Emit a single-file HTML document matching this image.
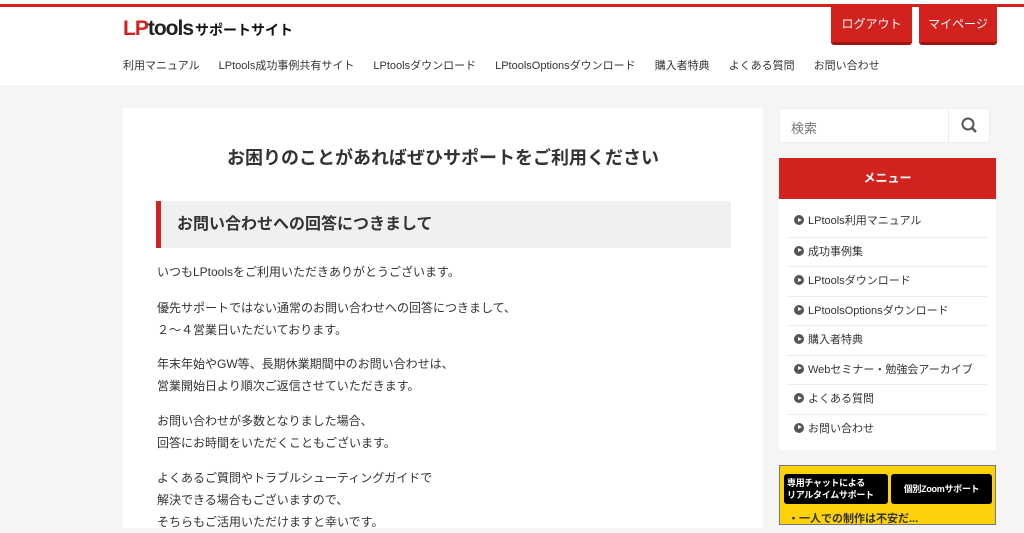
<!DOCTYPE html>
<html><head><meta charset="utf-8"><style>
*{margin:0;padding:0;box-sizing:border-box}
body{width:1024px;height:523px;overflow:hidden;background:#f5f5f5;font-family:"Liberation Sans","Noto Sans CJK JP",sans-serif;color:#333;position:relative}
.top{position:absolute;left:0;top:0;width:1024px;height:85px;background:#fff;border-top:4px solid #fff}
.redline{position:absolute;left:0;top:4px;width:1024px;height:3px;background:#d2221e}
.logo{position:absolute;left:123px;top:17px;font-weight:bold;font-size:21px;letter-spacing:-1px}
.logo .lp{color:#d2221e}.logo .t{color:#222}
.logo .s{font-size:14px;letter-spacing:0;margin-left:2px;color:#111}
.btn{position:absolute;top:7px;height:38px;background:#d2221e;color:#fff;font-size:12px;text-align:center;line-height:34px;border-bottom:3px solid #a01512;border-radius:0 0 3px 3px}
.nav{position:absolute;top:57px;left:123px;font-size:11px;color:#333;white-space:nowrap}
.nav span{margin-right:19px}
.main{position:absolute;left:123px;top:108px;width:640px;height:420px;background:#fff}
h1{position:absolute;left:0;width:640px;top:36px;text-align:center;font-size:18px;font-weight:bold;color:#333}
h2{position:absolute;left:33px;top:93px;width:575px;height:47px;background:#f0f0f0;border-left:5px solid #d2221e;font-size:16px;font-weight:bold;line-height:47px;padding-left:16px;color:#333}
.p{position:absolute;left:34px;font-size:12px;line-height:22px;color:#333}
.search{position:absolute;left:779px;top:108px;width:211px;height:35px;background:#fff;border:1px solid #eee;border-radius:3px}
.search span{position:absolute;left:11px;top:9px;font-size:13px;color:#777}
.search .b{position:absolute;left:168px;top:0;width:42px;height:33px;border-left:1px solid #eee}
.menu{position:absolute;left:779px;top:158px;width:217px;height:292px;background:#fff}
.mh{height:41px;background:#d2221e;color:#fff;font-size:12px;font-weight:bold;text-align:center;line-height:41px}
.mi{margin:0 8px;height:29.5px;border-top:1px solid #eee;font-size:11px;line-height:29px;padding-left:7px;color:#333}
.mi i{display:inline-block;width:10px;height:10px;border-radius:50%;background:#555;vertical-align:-1px;margin-right:4px;position:relative}
.mi i:after{content:"";position:absolute;left:4px;top:2.5px;border-left:4px solid #fff;border-top:2.5px solid transparent;border-bottom:2.5px solid transparent}
.ad{position:absolute;left:779px;top:465px;width:217px;height:60px;background:#fdd20b;border:1px solid #777}
.ab{position:absolute;top:8px;height:30px;background:#000;color:#fff;font-size:9px;font-weight:bold;border-radius:3px;line-height:12px;padding:3px 3px;white-space:nowrap;letter-spacing:-0.3px}
</style></head><body>
<div class="top"></div><div class="redline"></div>
<div class="logo"><span class="lp">LP</span><span class="t">tools</span><span class="s">サポートサイト</span></div>
<div class="btn" style="left:831px;width:81px">ログアウト</div>
<div class="btn" style="left:919px;width:78px">マイページ</div>
<div class="nav"><span>利用マニュアル</span><span>LPtools成功事例共有サイト</span><span>LPtoolsダウンロード</span><span>LPtoolsOptionsダウンロード</span><span>購入者特典</span><span>よくある質問</span><span>お問い合わせ</span></div>
<div class="main">
<h1>お困りのことがあればぜひサポートをご利用ください</h1>
<h2>お問い合わせへの回答につきまして</h2>
<div class="p" style="top:153px">いつもLPtoolsをご利用いただきありがとうございます。</div>
<div class="p" style="top:189px">優先サポートではない通常のお問い合わせへの回答につきまして、<br>２～４営業日いただいております。</div>
<div class="p" style="top:245px">年末年始やGW等、長期休業期間中のお問い合わせは、<br>営業開始日より順次ご返信させていただきます。</div>
<div class="p" style="top:302px">お問い合わせが多数となりました場合、<br>回答にお時間をいただくこともございます。</div>
<div class="p" style="top:359px">よくあるご質問やトラブルシューティングガイドで<br>解決できる場合もございますので、<br>そちらもご活用いただけますと幸いです。</div>
</div>
<div class="search"><span>検索</span><div class="b"><svg width="42" height="33" viewBox="0 0 42 33"><circle cx="19" cy="15" r="5.5" fill="none" stroke="#555" stroke-width="2"/><path d="M23 19l4 4" stroke="#555" stroke-width="2.5"/></svg></div></div>
<div class="menu"><div class="mh">メニュー</div>
<div class="mi" style="border-top:0;margin-top:8px"><i></i>LPtools利用マニュアル</div>
<div class="mi"><i></i>成功事例集</div>
<div class="mi"><i></i>LPtoolsダウンロード</div>
<div class="mi"><i></i>LPtoolsOptionsダウンロード</div>
<div class="mi"><i></i>購入者特典</div>
<div class="mi"><i></i>Webセミナー・勉強会アーカイブ</div>
<div class="mi"><i></i>よくある質問</div>
<div class="mi"><i></i>お問い合わせ</div>
</div>
<div class="ad">
<div class="ab" style="left:4px;width:104px">専用チャットによる<br>リアルタイムサポート</div>
<div class="ab" style="left:111px;width:101px;line-height:24px;text-align:center">個別Zoomサポート</div>
<div style="position:absolute;left:8px;top:44px;font-size:11px;font-weight:bold">・一人での制作は不安だ...</div>
</div>
</body></html>
